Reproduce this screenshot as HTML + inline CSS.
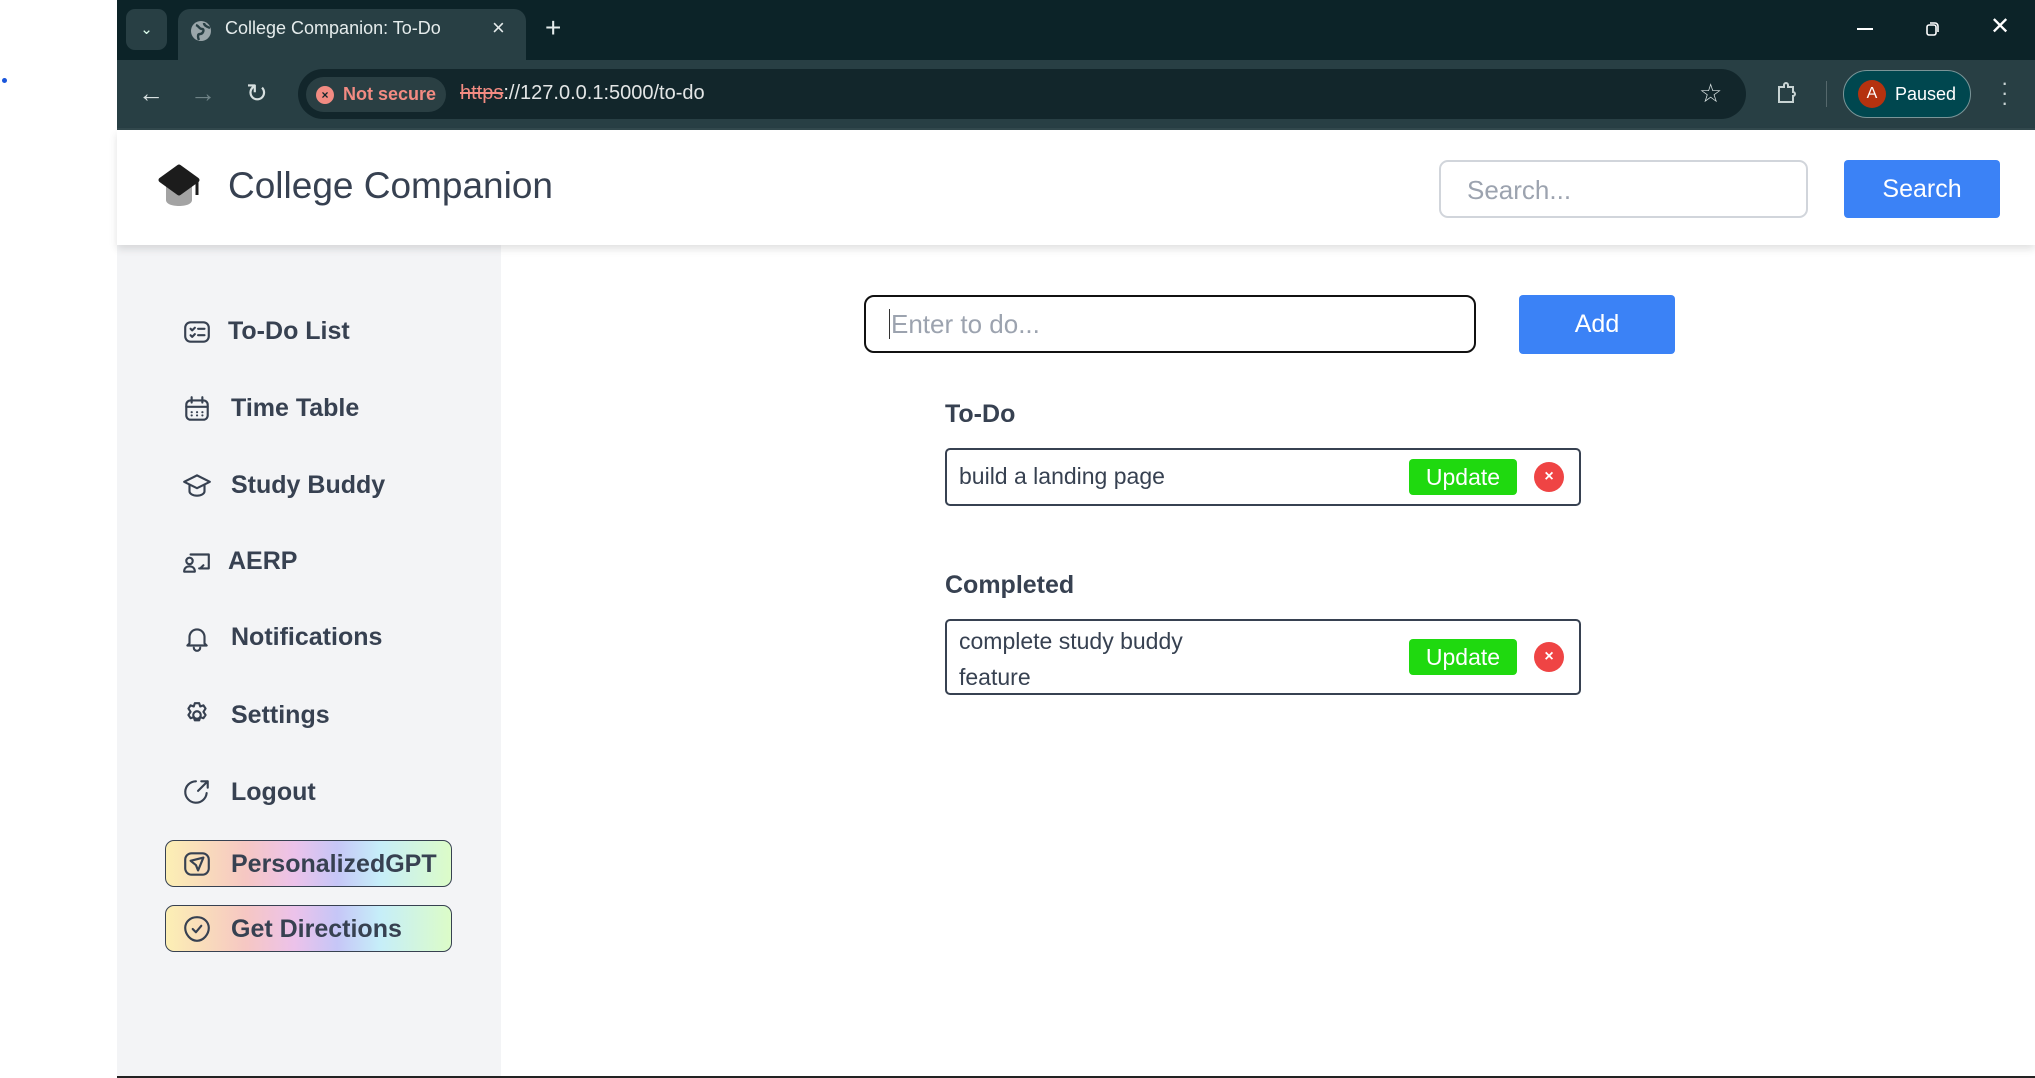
<!DOCTYPE html>
<html><head><meta charset="utf-8"><style>
*{margin:0;padding:0;box-sizing:border-box}
body{width:2035px;height:1078px;position:relative;overflow:hidden;background:#fff;font-family:"Liberation Sans",sans-serif}
.a{position:absolute}
.nav{position:absolute;left:228px;font-size:25px;font-weight:600;color:#374151;line-height:30px}
.ic{position:absolute;left:182px;width:30px;height:30px}
.ic *{fill:none;stroke:#374151;stroke-width:2;stroke-linecap:round;stroke-linejoin:round}
.grad{position:absolute;left:165px;width:287px;height:47px;border:1.5px solid #374151;border-radius:9px;background:linear-gradient(90deg,#fcefb4 0%,#f6c7c3 28%,#ecc2ea 45%,#c6c6f7 60%,#c6eef9 75%,#dcfcc8 100%)}
.card{position:absolute;left:945px;width:636px;border:2px solid #374151;border-radius:5px;font-size:23px;color:#374151}
.upd{position:absolute;left:462px;width:108px;height:36px;background:#1fd90f;color:#fff;border-radius:4px;font-size:23px;text-align:center;line-height:36px}
.x{position:absolute;left:587px;width:30px;height:30px;border-radius:50%;background:#ef4444;color:#fff;font-size:16px;font-weight:bold;text-align:center;line-height:30px}
</style></head><body>
<div class="a" style="left:2px;top:78px;width:5px;height:5px;border-radius:50%;background:#1a56db"></div>
<div class="a" style="left:117px;top:0;width:1918px;height:60px;background:#0c2328"></div>
<div class="a" style="left:126px;top:9px;width:41px;height:41px;border-radius:9px;background:#283f44;color:#dfe;font-size:15px;text-align:center;line-height:41px">&#8964;</div>
<div class="a" style="left:178px;top:9px;width:348px;height:52px;border-radius:12px 12px 0 0;background:#283f44"></div>
<svg class="a" style="left:190px;top:20px" width="22" height="22" viewBox="0 0 22 22"><circle cx="11" cy="11" r="10" fill="#9aa6aa"/><path d="M6 5c3 1 3 4 6 4s1 5-2 5-2 4-1 6M14 3c0 3 4 4 6 5" stroke="#283f44" stroke-width="2.4" fill="none"/></svg>
<div class="a" style="left:225px;top:18px;color:#e5ecec;font-size:18px">College Companion: To-Do</div>
<div class="a" style="left:492px;top:15px;color:#e5ecec;font-size:22px">×</div>
<div class="a" style="left:545px;top:12px;color:#e5ecec;font-size:28px">+</div>
<div class="a" style="left:1857px;top:28px;width:16px;height:2px;background:#fff"></div>
<svg class="a" style="left:1925px;top:21px" width="16" height="16"><rect x="2" y="4" width="9" height="10" rx="2" fill="none" stroke="#fff" stroke-width="1.6"/><path d="M5 2h5a3 3 0 0 1 3 3v6" fill="none" stroke="#fff" stroke-width="1.6"/></svg>
<div class="a" style="left:1990px;top:12px;color:#fff;font-size:24px">✕</div>
<div class="a" style="left:117px;top:60px;width:1918px;height:70px;background:#283f44"></div>
<div class="a" style="left:117px;top:128px;width:1918px;height:2px;background:#33494e"></div>
<div class="a" style="left:138px;top:78px;color:#d7e0e0;font-size:26px">&#8592;</div>
<div class="a" style="left:190px;top:78px;color:#6f8387;font-size:26px">&#8594;</div>
<div class="a" style="left:246px;top:78px;color:#d7e0e0;font-size:26px">&#8635;</div>
<div class="a" style="left:298px;top:69px;width:1448px;height:50px;border-radius:25px;background:#12262b"></div>
<div class="a" style="left:306px;top:77px;width:140px;height:35px;border-radius:18px;background:#2a3f43"></div>
<div class="a" style="left:316px;top:86px;width:18px;height:18px;border-radius:50%;background:#f28b82;color:#12262b;font-size:12px;font-weight:bold;text-align:center;line-height:18px">×</div>
<div class="a" style="left:343px;top:84px;color:#f28b82;font-size:18px;font-weight:bold">Not secure</div>
<div class="a" style="left:460px;top:82px;color:#e3e6e6;font-size:20px"><span style="color:#f28b82;text-decoration:line-through">https</span>://127.0.0.1:5000/to-do</div>
<div class="a" style="left:1699px;top:78px;color:#d7e0e0;font-size:26px">☆</div>
<svg class="a" style="left:1776px;top:82px" width="22" height="24"><path d="M3 5h5V3a2 2 0 0 1 4 0v2h5v5a2 2 0 0 1 0 4v6H3z" fill="none" stroke="#c8d3d3" stroke-width="2"/></svg>
<div class="a" style="left:1826px;top:81px;width:1px;height:26px;background:#55686c"></div>
<div class="a" style="left:1843px;top:70px;width:128px;height:48px;border-radius:24px;background:#00474f;border:1.5px solid #7a9598"></div>
<div class="a" style="left:1858px;top:80px;width:28px;height:28px;border-radius:50%;background:#b5320f;color:#fff;font-size:16px;text-align:center;line-height:28px">A</div>
<div class="a" style="left:1895px;top:84px;color:#fff;font-size:18px">Paused</div>
<div class="a" style="left:2001px;top:78px;color:#c8d3d3;font-size:22px;line-height:10px">·<br>·<br>·</div>
<div class="a" style="left:117px;top:130px;width:1918px;height:115px;background:#fff;box-shadow:0 4px 8px rgba(0,0,0,.12);z-index:2">
<svg class="a" style="left:40px;top:34px" width="46" height="46" viewBox="0 0 46 46"><path d="M9 20v16c0 4 6 6 13 6s13-2 13-6V20z" fill="#a3a3a3"/><path d="M22 3L40 16 22 29 4 16z" fill="#1c1c1c" stroke="#1c1c1c" stroke-width="5" stroke-linejoin="round"/><path d="M40 17v14" stroke="#1c1c1c" stroke-width="3"/></svg>
<div class="a" style="left:111px;top:35px;font-size:37px;color:#374151">College Companion</div>
<div class="a" style="left:1322px;top:30px;width:369px;height:58px;border:2.5px solid #d1d5db;border-radius:9px;color:#9ca3af;font-size:26px;padding:13px 0 0 26px">Search...</div>
<div class="a" style="left:1727px;top:30px;width:156px;height:58px;background:#3b82f6;border-radius:4px;color:#fff;font-size:25px;text-align:center;line-height:58px">Search</div>
</div>
<div class="a" style="left:117px;top:245px;width:384px;height:831px;background:#f3f4f6"></div>
<div class="a" style="left:117px;top:1076px;width:1918px;height:2px;background:#222"></div>
<svg class="ic" style="top:317px" viewBox="0 0 28 28"><rect x="3" y="5" width="22" height="18" rx="5"/><path d="M8 11l1.5 1.5L12 10M8 17l1.5 1.5L12 16M15 11h6M15 17h6"/></svg>
<div class="nav" style="top:316px">To-Do List</div>
<svg class="ic" style="top:394px" viewBox="0 0 28 28"><rect x="4" y="6" width="20" height="18" rx="4"/><path d="M9 3v5M19 3v5M4 12h20M9 17h.1M14 17h.1M19 17h.1M9 20h.1M14 20h.1M19 20h.1"/></svg>
<div class="nav" style="top:393px;left:231px">Time Table</div>
<svg class="ic" style="top:470px" viewBox="0 0 28 28"><path d="M2 11l12-6 12 6-12 6z"/><path d="M7 14v6c0 2 3 4 7 4s7-2 7-4v-6"/></svg>
<div class="nav" style="top:470px;left:231px">Study Buddy</div>
<svg class="ic" style="top:547px" viewBox="0 0 28 28"><path d="M8 7h17v13h-9M17 20l3-3" /><circle cx="7" cy="13" r="3" fill="#374151"/><path d="M2 23c0-4 3-5 5-5s5 1 5 5z" fill="#374151"/></svg>
<div class="nav" style="top:546px">AERP</div>
<svg class="ic" style="top:623px" viewBox="0 0 28 28"><path d="M7 19V13a7 7 0 0 1 14 0v6l2 2H5z"/><path d="M11 23a3 3 0 0 0 6 0"/></svg>
<div class="nav" style="top:622px;left:231px">Notifications</div>
<svg class="ic" style="top:700px" viewBox="0 0 28 28"><circle cx="14" cy="14" r="3.5"/><path d="M12 3h4l1 3 3-1 2 3-2 3 2 3-2 3-3-1-1 3h-4l-1-3-3 1-2-3 2-3-2-3 2-3 3 1z"/></svg>
<div class="nav" style="top:700px;left:231px">Settings</div>
<svg class="ic" style="top:777px" viewBox="0 0 28 28"><path d="M23 15A10 10 0 1 1 13 4"/><path d="M15 13l9-9M18 4h6v6"/></svg>
<div class="nav" style="top:777px;left:231px">Logout</div>
<div class="grad" style="top:840px"></div>
<svg class="ic" style="top:849px" viewBox="0 0 28 28"><rect x="3" y="4" width="22" height="20" rx="6"/><path d="M8 11l12-3-5 12-2-5z"/></svg>
<div class="nav" style="top:849px;left:231px">PersonalizedGPT</div>
<div class="grad" style="top:905px"></div>
<svg class="ic" style="top:914px" viewBox="0 0 28 28"><path d="M14 3c6 0 11 4 11 10s-5 12-11 12S3 19 3 13 8 3 14 3z"/><path d="M10 14l3 3 5-6"/></svg>
<div class="nav" style="top:914px;left:231px">Get Directions</div>
<div class="a" style="left:864px;top:295px;width:612px;height:58px;border:2.5px solid #111;border-radius:10px;font-size:26px;color:#9ca3af;padding:12px 0 0 26px"><span style="border-left:1.5px solid #333;margin-left:-3px;padding-left:1px">Enter to do...</span></div>
<div class="a" style="left:1519px;top:295px;width:156px;height:59px;background:#3b82f6;border-radius:4px;color:#fff;font-size:25px;text-align:center;line-height:59px">Add</div>
<div class="a" style="left:945px;top:400px;font-size:25px;font-weight:600;color:#374151">To-Do</div>
<div class="card" style="top:448px;height:58px"><div class="a" style="left:12px;top:13px">build a landing page</div><div class="upd" style="top:9px">Update</div><div class="x" style="top:12px">×</div></div>
<div class="a" style="left:945px;top:571px;font-size:25px;font-weight:600;color:#374151">Completed</div>
<div class="card" style="top:619px;height:76px"><div class="a" style="left:12px;top:2px;line-height:36px">complete study buddy<br>feature</div><div class="upd" style="top:18px">Update</div><div class="x" style="top:21px">×</div></div>
</body></html>
